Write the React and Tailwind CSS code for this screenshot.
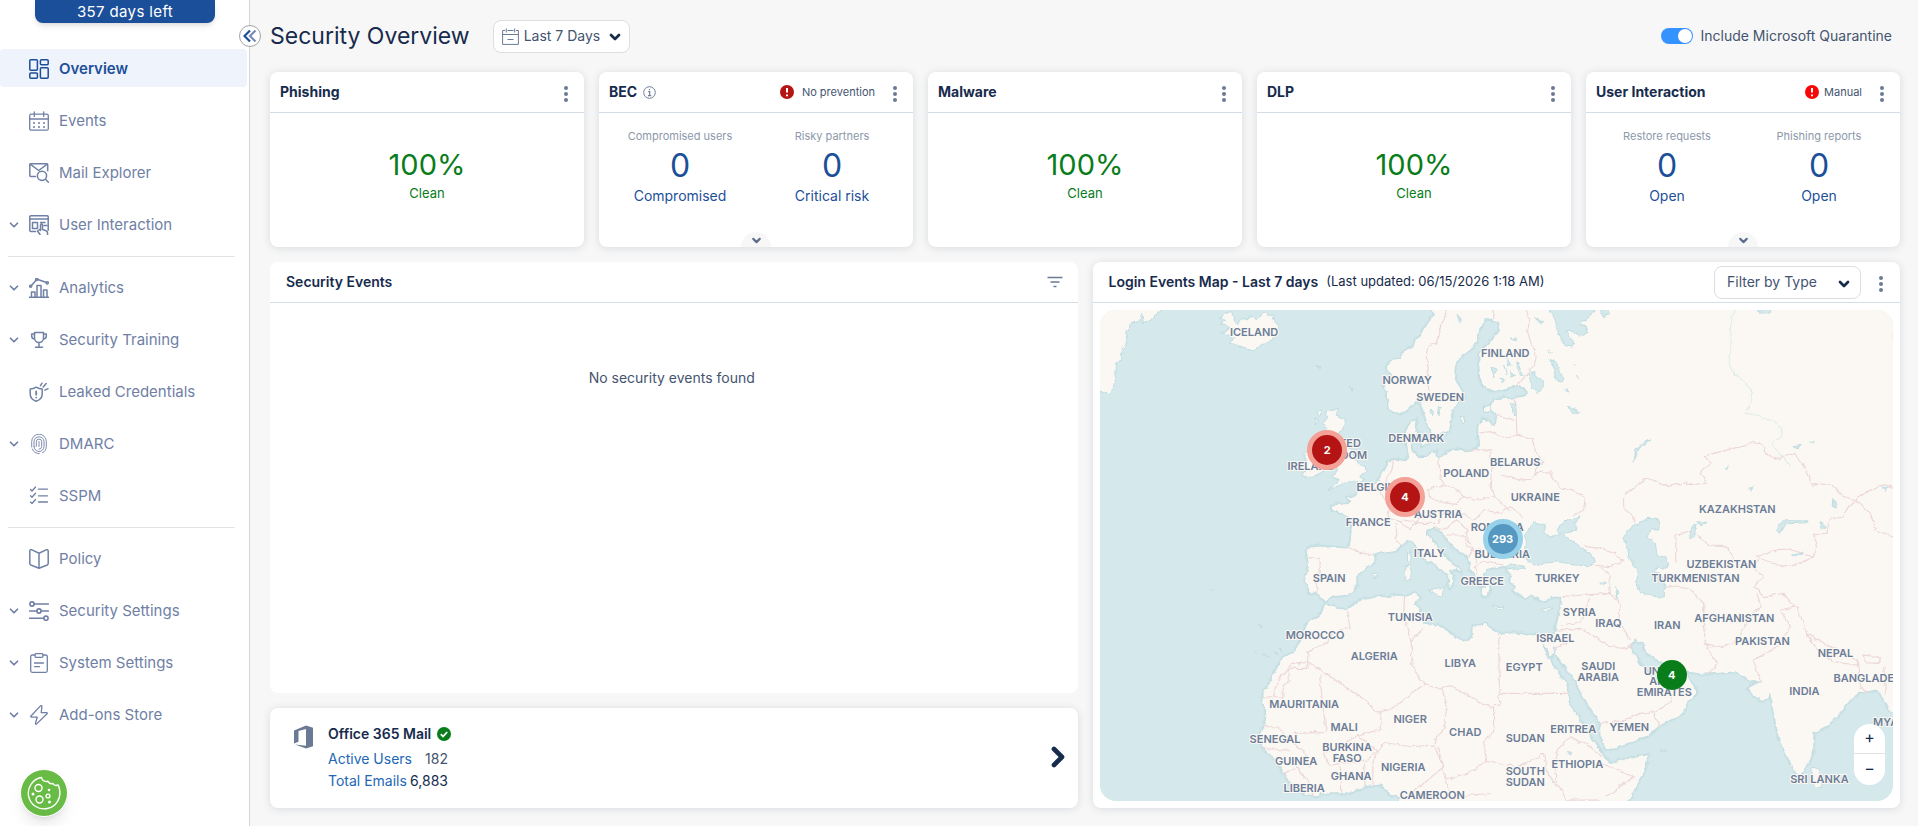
import { useState } from "react";
import { ChevronDown, ChevronRight } from "lucide-react";

const svgProps = {
  width: 20,
  height: 20,
  viewBox: "0 0 20 20",
  fill: "none",
  stroke: "currentColor",
  strokeWidth: 1.3,
  strokeLinecap: "round",
  strokeLinejoin: "round",
};

const icons = {
  overview: (
    <svg {...svgProps} strokeWidth={1.5}>
      <rect x="0.8" y="0.8" width="7.6" height="10.4" rx="1" />
      <rect x="11.4" y="0.8" width="7.8" height="5" rx="1" />
      <rect x="0.8" y="14" width="7.6" height="5.2" rx="1" />
      <rect x="11.4" y="8.8" width="7.8" height="10.4" rx="1" />
    </svg>
  ),
  events: (
    <svg {...svgProps}>
      <rect x="0.7" y="3.2" width="18.6" height="16" rx="1.5" />
      <path d="M.7 8h18.6M5.3.8v4.6M14.7.8v4.6" />
      <path strokeWidth="2" d="M5 12h.01M10 12h.01M15 12h.01M5 16h.01M10 16h.01M15 16h.01" />
    </svg>
  ),
  mail: (
    <svg {...svgProps} strokeWidth={1.5}>
      <path d="M6.5 13.5H1.8a1 1 0 0 1-1-1V1.8a1 1 0 0 1 1-1h15.9a1 1 0 0 1 1 1v6" />
      <path d="M1.2 1.2l8.5 6.3 8.5-6.3" />
      <circle cx="13" cy="12.8" r="4.6" />
      <path d="M16.4 16.2l3 3" />
    </svg>
  ),
  interaction: (
    <svg {...svgProps} strokeWidth={1.5}>
      <path d="M6.5 16.5H1.8a1 1 0 0 1-1-1V1.8a1 1 0 0 1 1-1h16.4a1 1 0 0 1 1 1v13.500" />
      <path d="M.8 4h18.4" />
      <rect x="3.5" y="7.5" width="5" height="6" />
      <path d="M11.5 7.5H16M18 10.500h-3M11.5 15.500V10a1 1 0 0 1 2 0v4.500l3 1c2 .6 2.500 1.500 2 4M11.500 14l-3 2 2.500 3.500" />
    </svg>
  ),
  analytics: (
    <svg {...svgProps} strokeWidth={1.5}>
      <path d="M.5 19.3h19M2.500 19v-5h3.500v5M8 19V7.500h4V19M14.500 19v-7H18v7" />
      <path d="M2.500 7.500L7 2.200M8.800 1.500l8 2.800" />
      <circle cx="1.7" cy="8.3" r="1" />
      <circle cx="7.7" cy="1.4" r="1" />
      <circle cx="18.2" cy="4.8" r="1.1" />
    </svg>
  ),
  training: (
    <svg {...svgProps} strokeWidth={1.5}>
      <path d="M5.5 2.500h9v5.500a4.500 4.500 0 0 1-9 0zM5.500 4H2.700v2c0 1.800 1.200 3 3 3M14.500 4h2.800v2c0 1.800-1.200 3-3 3M10 12.500v4.500M6.500 17.200h7" />
    </svg>
  ),
  leaked: (
    <svg {...svgProps} strokeWidth={1.5}>
      <path d="M7.2 5.200C5 6.600 3 7 1.200 7v5c0 3.600 2.500 6 6 7.300 3.500-1.300 6-3.700 6-7.300V7c-1.800 0-3.800-.4-6-1.800z" />
      <path strokeWidth="1.8" d="M7.2 9.300v3.400M7.200 15.600v.01" />
      <path d="M11.5 3.700l1.500-2.500M14.200 5l3-3.500M16 8.200l3-1.500" />
    </svg>
  ),
  dmarc: (
    <svg {...svgProps} strokeWidth={0.9}>
      <path d="M2.7 13V7.500a7.300 7.300 0 0 1 14.600 0v5c0 3-1.500 5.300-3.800 6.300M3.300 15a7 7 0 0 0 7 4.500" />
      <path d="M5 12.500V7.800a5 5 0 0 1 10 0v4.700a5 5 0 0 1-10 0" />
      <path d="M7.300 12.500V7.800a2.700 2.700 0 0 1 5.400 0v4.700a2.700 2.700 0 0 1-2.700 2.700" />
      <path d="M10 7.500v5" />
    </svg>
  ),
  sspm: (
    <svg {...svgProps}>
      <path d="M1.5 3.500l1.500 1.500L6.500 1M1.500 9.800l1.500 1.500 3.500-4M1.500 16l1.500 1.500 3.500-4M9.500 3.200h9M9.500 9.800h9M9.500 16h9" />
    </svg>
  ),
  policy: (
    <svg {...svgProps} strokeWidth={1.5}>
      <path d="M10 4.200L3 .9C1.500.4.8.8.8 2v12.500c0 .7.3 1.200 1 1.500l8.200 3.200 8.200-3.200c.7-.3 1-.8 1-1.500V2c0-1.200-.7-1.600-2.200-1.100zM10 4.200v15" />
    </svg>
  ),
  security: (
    <svg {...svgProps} strokeWidth={1.6}>
      <path d="M5 3h14.300M.7 10h7M12.300 10h7M.7 17.200H15" />
      <circle cx="3" cy="3" r="2.1" />
      <circle cx="10" cy="10" r="2.1" />
      <circle cx="17" cy="17.2" r="2.1" />
    </svg>
  ),
  system: (
    <svg {...svgProps}>
      <path d="M6 2H3.200a1.500 1.500 0 0 0-1.500 1.500v14.300a1.500 1.500 0 0 0 1.500 1.500h13.600a1.500 1.500 0 0 0 1.500-1.500V3.500A1.500 1.500 0 0 0 16.800 2H14" />
      <rect x="6" y="0.7" width="8" height="3.6" rx="1" />
      <path d="M5.500 10h9M5.500 13.700h5" />
    </svg>
  ),
  addons: (
    <svg {...svgProps}>
      <path d="M11.500.9L2 11c-.5.6-.3 1.200.5 1.200h5.700l-1.700 6c-.2.9.6 1.300 1.200.7L18 8.800c.5-.6.3-1.200-.5-1.200h-5.300l.7-6c.1-.9-.8-1.300-1.400-.7z" />
    </svg>
  ),
};

const menu = [
  [
    { label: "Overview", icon: "overview", active: true },
    { label: "Events", icon: "events" },
    { label: "Mail Explorer", icon: "mail" },
    { label: "User Interaction", icon: "interaction", open: true },
  ],
  [
    { label: "Analytics", icon: "analytics", open: true },
    { label: "Security Training", icon: "training", open: true },
    { label: "Leaked Credentials", icon: "leaked" },
    { label: "DMARC", icon: "dmarc", open: true },
    { label: "SSPM", icon: "sspm" },
  ],
  [
    { label: "Policy", icon: "policy" },
    { label: "Security Settings", icon: "security", open: true },
    { label: "System Settings", icon: "system", open: true },
    { label: "Add-ons Store", icon: "addons", open: true },
  ],
];

function Sidebar() {
  return (
    <aside className="relative flex w-[250px] shrink-0 flex-col border-r border-[#d5d6d9] bg-white">
      <div className="ml-[35px] flex h-[23px] w-[180px] items-center justify-center rounded-b-lg bg-[#1c4f99] pt-[2px] text-[15px] tracking-wide text-white shadow-md">
        357 days left
      </div>
      <button
        aria-label="Collapse menu"
        className="absolute top-[25px] -right-[12px] flex size-[22px] items-center justify-center rounded-full border border-[#a5a5a5] bg-white"
      >
        <svg width="14" height="14" viewBox="0 0 14 14" fill="none" strokeWidth="2.2">
          <path stroke="#1c4f99" d="M7 1.500L1.500 7 7 12.500" />
          <path stroke="#7c8bb0" d="M12.500 1.500L7 7l5.500 5.500" />
        </svg>
      </button>
      <nav className="mt-[26px] flex flex-col">
        {menu.map((group, i) => (
          <ul key={i} className={i === 0 ? "flex flex-col gap-[14px]" : "mt-[13px] flex flex-col gap-[14px]"}>
            {i > 0 && <li className="mr-[14px] -mb-[3px] ml-2 border-t border-[#e2e2e4]" />}
            {group.map((item) => (
              <li key={item.label}>
                <a
                  href="#"
                  className={
                    item.active
                      ? "mr-[2px] flex h-[38px] items-center rounded bg-[#eff3fb] pt-[2px] text-[15px] font-semibold text-[#1c4f99]"
                      : "mr-[2px] flex h-[38px] items-center pt-[2px] text-[15px] text-[#7080a5]"
                  }
                >
                  <span className="flex w-[29px] justify-start pl-[7px]">
                    {item.open && <ChevronDown size={14} strokeWidth={3} />}
                  </span>
                  <span className="flex w-5 justify-center">{icons[item.icon]}</span>
                  <span className="ml-[10px]">{item.label}</span>
                </a>
              </li>
            ))}
          </ul>
        ))}
      </nav>
      <button
        aria-label="Cookie settings"
        className="absolute bottom-[9px] left-[20px] flex size-12 items-center justify-center rounded-full border border-white bg-[#68bc45] text-white shadow-lg"
      >
        <svg width="34" height="34" viewBox="0 0 34 34" fill="none" stroke="currentColor" strokeWidth="1.4" strokeLinejoin="round">
          <path d="M14.500 1.500A15.800 15.800 0 1 0 32.500 13.500c-.2-2-.7-3.400-1.500-4.500-2 1-4 .3-5-1.500-2 .5-4-.3-5-2.200-3 .6-6-.6-6.500-3.800z" />
          <circle cx="11.5" cy="12" r="3.5" />
          <circle cx="12.5" cy="23.5" r="3.5" />
          <circle cx="21" cy="20" r="1.9" />
          <circle cx="22" cy="14" r="1.3" fill="currentColor" stroke="none" />
          <circle cx="6" cy="18" r="1.5" fill="currentColor" stroke="none" />
          <circle cx="22.5" cy="26" r="1.5" fill="currentColor" stroke="none" />
        </svg>
      </button>
    </aside>
  );
}

function Dots() {
  return (
    <button aria-label="More options" className="flex w-4 flex-col items-center gap-[2px] pt-[3px]">
      <span className="size-1 rounded-full bg-[#6b7a94]" />
      <span className="size-1 rounded-full bg-[#6b7a94]" />
      <span className="size-1 rounded-full bg-[#6b7a94]" />
    </button>
  );
}

function Alert({ color }) {
  return (
    <svg width="14" height="14" viewBox="0 0 14 14">
      <circle cx="7" cy="7" r="7" fill={color} />
      <path d="M7 3v4.500M7 9.500v1.800" stroke="#fff" strokeWidth="2" />
    </svg>
  );
}

const cards = [
  { title: "Phishing" },
  {
    title: "BEC",
    info: true,
    status: "No prevention",
    color: "#b41414",
    stats: [
      ["Compromised users", "Compromised"],
      ["Risky partners", "Critical risk"],
    ],
  },
  { title: "Malware" },
  { title: "DLP" },
  {
    title: "User Interaction",
    status: "Manual",
    color: "#f90606",
    stats: [
      ["Restore requests", "Open"],
      ["Phishing reports", "Open"],
    ],
  },
];

function Card({ card }) {
  return (
    <section className="relative flex h-[175px] flex-col overflow-hidden rounded-lg bg-white shadow-[0_1px_8px_rgba(30,50,80,0.14)]">
      <header className="flex h-[41px] items-center border-b border-[#d5dde8] px-[10px]">
        <h2 className="text-sm font-bold text-[#172b4d]">{card.title}</h2>
        {card.info && (
          <svg className="ml-[6px]" width="13" height="13" viewBox="0 0 13 13" fill="none" stroke="#6f7f99">
            <circle cx="6.5" cy="6.5" r="5.8" />
            <path d="M5.200 5.700h1.500v4M5 9.700h3.200M6.500 3v1.300" strokeWidth="1.2" />
          </svg>
        )}
        <div className="ml-auto flex items-center">
          {card.status && (
            <>
              <Alert color={card.color} />
              <span className={card.info ? "mr-3 ml-2 text-[11px] text-[#44546f]" : "mr-3 ml-[5px] text-[11px] text-[#44546f]"}>
                {card.status}
              </span>
            </>
          )}
          <Dots />
        </div>
      </header>
      {card.stats ? (
        <div className="grid grid-cols-2 px-[5px] pt-[15px]">
          {card.stats.map(([top, bottom]) => (
            <a href="#" key={top} className="flex flex-col items-center text-[#1c4f99]">
              <span className="text-[11px] leading-4 text-[#8c98ab]">{top}</span>
              <span className="mt-[2px] text-[32px] leading-10">0</span>
              <span className="text-sm leading-5">{bottom}</span>
            </a>
          ))}
        </div>
      ) : (
        <a href="#" className="flex flex-col items-center pt-8 text-[#087d1a]">
          <span className="text-[29px] leading-10">100%</span>
          <span className="text-[13px] leading-4">Clean</span>
        </a>
      )}
      {card.stats && (
        <button
          aria-label="Expand"
          className="absolute bottom-0 left-1/2 flex h-[15px] w-[30px] -translate-x-1/2 items-center justify-center rounded-t-full bg-[#f7f7f7] pt-[2px] text-[#5f6f8b]"
        >
          <ChevronDown size={13} strokeWidth={4} />
        </button>
      )}
    </section>
  );
}

const mainland =
  "M1025 20 1030 45 1018 60 1012 75 1000 85 990 105 975 120 968 138 950 150 935 160 930 172 910 180 895 190 888 200 890 215 905 222 888 240 880 262 890 275 888 290 895 300 892 318 905 332 925 342 945 335 962 318 975 310 988 300 995 320 1000 340 1005 355 1012 378 1025 405 1045 412 1055 400 1078 395 1083 360 1085 330 1100 310 1120 295 1115 270 1100 250 1093 230 1095 200 1105 180 1125 160 1150 140 1165 120 1165 100 1175 80 1185 60 1205 58 1225 68 1230 90 1210 110 1195 130 1180 145 1168 165 1165 190 1167 215 1168 240 1180 260 1205 275 1230 270 1260 262 1290 257 1315 280 1290 290 1250 298 1242 292 1215 300 1203 310 1205 330 1220 345 1215 370 1205 375 1190 360 1175 358 1163 380 1162 410 1165 435 1160 445 1140 450 1125 455 1110 445 1085 450 1060 465 1048 475 1035 468 1040 455 1020 460 1010 470 985 470 966 450 962 430 970 415 983 400 975 385 978 358 955 372 945 395 948 420 950 440 955 470 945 482 930 480 910 478 890 488 888 500 875 515 868 535 855 548 840 555 830 562 805 575 795 588 772 590 778 605 770 615 750 612 725 615 722 625 735 632 750 640 770 650 785 670 782 700 780 725 775 745 740 742 690 738 655 742 648 750 652 775 655 800 650 815 643 840 652 860 652 880 680 880 695 895 706 905 720 890 750 888 775 885 790 870 800 855 800 830 815 815 835 800 852 790 855 775 850 765 870 755 895 758 915 755 935 735 950 722 965 725 975 735 980 750 1000 775 1030 790 1045 805 1060 815 1075 825 1078 840 1072 855 1080 865 1092 845 1090 830 1078 812 1095 808 1113 820 1112 810 1085 790 1060 765 1045 745 1030 720 1012 703 1012 690 1030 685 1045 692 1060 705 1070 720 1090 745 1120 762 1135 775 1138 795 1140 810 1150 825 1160 840 1168 858 1190 862 1170 868 1175 885 1187 892 1195 885 1200 865 1192 845 1180 822 1190 808 1210 805 1235 800 1262 802 1250 812 1262 825 1258 845 1275 860 1270 875 1290 885 1305 895 1320 885 1345 900 1365 905 1385 892 1400 892 1415 890 1412 915 1405 940 1400 965 1392 1000 1370 1012 1335 1000 1310 1005 1290 1000 1265 998 1240 1002 1228 998 1210 990 1185 973 1160 975 1145 985 1145 1010 1130 1025 1110 1020 1080 1000 1065 985 1035 975 1000 970 985 955 990 930 975 910 990 890 975 880 945 888 920 885 890 890 860 890 820 895 790 915 770 928 740 925 715 915 705 910 695 935 680 950 655 965 640 990 630 1025 610 1055 575 1075 555 1110 540 1145 520 1175 513 1195 525 1220 527 1250 520 1280 505 1310 515 1330 520 1350 545 1370 565 1395 580 1420 600 1450 640 1480 675 1490 700 1480 740 1478 770 1482 800 1468 830 1460 870 1455 890 1470 900 1485 925 1490 935 1520 1605 1520 1640 1460 1665 1410 1673 1363 1640 1370 1590 1380 1560 1387 1545 1375 1530 1350 1500 1310 1480 1280 1465 1250 1445 1225 1435 1200 1430 1150 1400 1110 1370 1060 1355 1030 1368 1050 1382 1070 1395 1040 1393 1065 1430 1110 1455 1145 1475 1185 1505 1235 1530 1270 1533 1320 1545 1347 1580 1342 1630 1325 1670 1310 1705 1280 1740 1260 1780 1240 1790 1210 1820 1180 1815 1160 1800 1145 1790 1118 1775 1145 1750 1155 1710 1155 1685 1135 1675 1120 1665 1105 1650 1090 1630 1060 1620 1035 1635 1020 1655 1030 1670 1060 1700 1080 1730 1100 1780 1115 1830 1122 1880 1120 1935 1115 1965 1135 1980 1145 2005 1145 1970 1165 1990 1185 2015 1205 2035 1195 2038 1180 2045 1210 2050 1260 2065 1320 2095 1380 2115 1420 2130 1425 2142 1405 2160 1380 2170 1350 2170 1300 2205 1280 2230 1260 2260 1225 2285 1195 2305 1180 2330 1175 2360 1170 2370 1185 2390 1220 2420 1250 2420 20Z";

const islands = [
  "M10 10H225L210 35 195 48 180 62 160 68 155 45 148 65 120 72 118 88 105 95 113 125 97 150 93 180 80 190 77 225 70 262 60 285 40 278 10 265Z",
  "M405 40 425 35 430 60 445 75 455 55 470 60 485 48 500 60 515 40 530 35 535 50 552 45 550 62 568 75 565 95 545 120 520 132 485 153 460 142 440 135 418 130 430 115 415 105 395 100 415 92 418 82 390 72 405 62 390 55Z",
  "M710 335 745 325 738 345 765 358 765 375 750 395 740 405 765 420 775 445 795 470 800 492 825 500 828 515 812 530 822 540 790 548 760 550 735 562 712 572 730 555 750 540 735 535 722 530 745 510 735 500 745 480 735 460 720 455 710 440 715 420 700 405 708 385 698 370 710 355Z",
  "M655 455 640 462 645 480 628 500 645 512 635 525 650 535 680 525 715 505 712 480 718 465 700 445 675 445Z",
  "M945 800 960 795 967 810 960 838 948 842 945 820Z",
  "M952 762 962 757 962 785 952 785Z",
  "M1015 868 1040 865 1062 862 1055 888 1040 885Z",
  "M1205 918 1240 920 1240 926 1210 924Z",
  "M1355 928 1385 922 1375 932 1360 935Z",
  "M990 420 1010 418 1012 435 995 440Z",
  "M1180 320 1200 315 1198 332 1180 335Z",
  "M1110 350 1125 352 1118 372 1112 368Z",
  "M680 335 692 330 690 345ZM672 355 688 362 680 372ZM1062 400h6v6z",
  "M845 825 858 820 865 828 850 834Z",
  "M2165 1400 2185 1410 2198 1440 2190 1462 2172 1462 2165 1435Z",
  "M1710 1350 1728 1350 1726 1354 1712 1354Z",
  "M495 1054h4v4zM515 1062h8v4zM532 1068h7v4zM555 1058h6v5zM567 1048h5v6zM680 200h8v6zM778 262h6v10zM362 868h7v4zM508 976h6v4z",
];

const lakes = [
  "M1375 20 1395 70 1405 105 1425 135 1445 138 1450 125 1435 110 1430 90 1455 98 1470 110 1492 100 1485 80 1470 70 1495 50 1530 20Z",
  "M1525 20 1540 50 1555 45 1560 20Z",
  "M1315 225 1330 218 1360 245 1358 265 1340 278 1325 260Z",
  "M1380 180 1400 190 1408 210 1420 240 1405 245 1390 225 1395 210Z",
  "M1262 312h14l2 30-8 3z",
  "M1435 320l20 5 10 15-15 0z",
  "M1985 20h55v18l-30 2z",
  "M1308 700 1330 668 1365 678 1362 695 1380 712 1410 700 1430 715 1470 740 1505 765 1515 785 1500 797 1450 795 1410 785 1360 790 1330 795 1300 770 1305 730Z",
  "M1395 692 1415 670 1435 660 1472 650 1455 670 1460 690 1430 700 1412 698Z",
  "M1240 802 1260 792 1300 798 1305 803 1270 808Z",
  "M1598 715 1615 690 1640 672 1675 655 1708 660 1705 690 1680 690 1670 710 1695 730 1700 765 1728 772 1735 795 1715 805 1705 800 1695 815 1712 825 1722 845 1722 888 1685 890 1650 875 1635 850 1645 820 1630 795 1615 770 1612 740Z",
  "M1798 715l5-30 14-12-6 40zM1820 665l30 2-18 10z",
  "M2058 690l20-28 74 0-6 6-60 4-16 28z",
  "M2100 765l38-5-20 10zM2190 668l10 5 2 12-8-2z",
  "M1575 860l8 15-2 20zM1525 848l22-2-8 8zM1432 1355l12 2-5 8zM1975 565l14-4-8 10z",
  "M2110 440l22-4-12 10zM2160 423h12v4zM2378 562h14l-4 12zM2230 595l8 30-10-5z",
  "M1630 488l6-35 20-25 26-8-24 16-18 22zM1905 505l8-8-4 12z",
  "M1100 45l14 12-4 8zM1045 320l10 0-14 28zM1020 330l12 5-8 8zM1205 200l15 10-10 20zM1240 195l8 30zM1280 185l10 20-8 6z",
  "M1250 180l12 14-10 4zM1262 215l12 12-12 4zM1290 210l8 16-10-4zM1232 235l12 4-8 8z",
  "M1335 55l25 10-8 6zM1260 115h18v8zM1375 150l8 12zM1450 195l6 4zM1460 225l8 10zM1425 270h10v6z",
];

const borders =
  "M1068 30 1065 55 1050 75 1052 100 1035 130 1012 140 1008 175 1015 210 1010 240 1018 275 1000 305M1205 30 1212 58M1308 30 1318 60 1312 95 1322 130 1338 175 1320 215 1290 245 1278 258M1275 295 1278 350 1280 405M1220 345 1270 360M1162 400 1200 395 1250 415 1280 405 1325 415 1335 455 1358 485 1338 505 1340 520M1230 525 1290 540 1325 538 1340 518 1380 515 1390 540 1415 568 1445 572 1485 592 1480 630 1452 645M1635 668 1630 650 1600 620 1600 585 1630 565 1665 535 1690 540 1730 560 1780 550 1830 552 1850 545 1828 520 1860 490 1843 468 1910 450 1965 438 1980 427 2015 432 2025 460 2065 478 2110 460 2135 490 2165 555 2220 552 2260 590 2295 600 2330 575 2380 555 2410 562M2295 600 2265 630 2260 652 2220 655 2205 700 2170 705 2178 740 2170 768M2295 600 2340 640 2355 690 2410 712M1756 790 1757 705 1800 692 1860 738 1910 740 1930 775M2000 770 2050 752 2100 750 2170 768 2130 790 2070 800 2010 775 1985 800 2020 830 1990 860 2020 890 2080 880 2110 920" +
  "M1045 475 1048 510 1058 555 1010 570M1058 555 1090 565 1120 590 1100 610 1060 605 1030 600 1010 570M1140 450 1200 450 1205 500 1200 560 1215 590 1165 600 1120 590M910 478 905 510 880 560 900 620 890 655M915 670 920 700 915 720 935 735M890 655 930 665 960 690 1000 640M940 660 1000 670 1040 670 1060 640 1110 630M1030 680 1060 690 1100 660 1130 690 1130 720 1150 740 1135 775M1065 705 1120 705 1130 740M1115 640 1150 660 1180 630 1230 640 1260 620 1300 650M1130 740 1180 750 1240 740 1300 755M1160 825 1155 800 1180 785 1240 795M1150 740 1160 790M1215 590 1260 635M775 745 810 758 850 765M655 770 690 775 690 820 680 840 680 880M840 555 870 575 885 600M1485 740 1530 745 1570 760 1600 780 1560 800 1500 795" +
  "M770 930 780 985 745 990 705 1030 653 1055 653 1085 820 1195 857 1235 873 1235 905 1225 1003 1152M513 1193 578 1193 580 1155 597 1145 597 1105 653 1105 653 1085M550 1190 560 1150 605 1090 653 1085M720 1127 688 1125 708 1297 610 1300M873 1235 870 1290 800 1305M943 890 940 950 963 1025 965 1100 1003 1152M963 1025 998 985M1003 1152 1045 1168 1073 1155 1210 1225M1225 1000 1228 1215 1210 1217 1210 1295 1180 1325 1190 1385M1228 1180 1430 1180M1055 1165 1070 1215 1062 1285 1030 1330M1030 1335 960 1340 890 1328 865 1345 848 1400 848 1455M1030 1335 1060 1400 1000 1450 950 1490M1045 1340 1065 1440 1120 1425 1190 1385 1290 1400 1360 1360 1370 1420 1400 1460M1065 1440 1080 1490 1200 1480M1400 1350 1440 1310 1500 1340 1535 1370M1400 1350 1395 1440 1430 1500 1530 1500M1535 1390 1630 1430 1550 1490M750 1340 800 1305 860 1350 830 1380 720 1395 700 1360 750 1340M520 1280 560 1280 600 1320 640 1355 660 1400M515 1345 600 1350M580 1420 620 1400 650 1440 670 1490M750 1400 755 1478M820 1390 825 1460" +
  "M1420 890 1480 885 1560 880 1555 820 1530 800M1560 880 1590 910 1585 960 1620 1020M1415 975 1470 965 1500 890M1400 990 1470 985 1560 1040 1600 1045 1625 1035M1395 1045 1430 1030 1430 1000M1533 1270 1610 1260 1650 1240 1690 1235 1740 1210 1750 1180M1690 1235 1705 1275M1722 862 1760 858 1800 870 1840 910 1840 985 1850 1040 1880 1090 1855 1120M1840 1035 1900 1040 1940 1020 1975 960 2010 920 2000 880M2010 1145 1990 1080 2060 1040 2100 980 2070 930 2120 920 2150 1000 2180 1050 2230 1085 2300 1095M2150 1000 2200 1030 2300 1080 2310 1160 2330 1180M2320 1065 2370 1070 2365 1090 2325 1088ZM2380 1100 2385 1180";

const rivers =
  "M1935 30C1905 80 1935 120 1915 190C1930 230 1960 240 1965 255 2015 300 1965 310 1968 340C2020 350 2090 370 2072 410 2010 440 2080 450 2100 500 2150 550C2200 570 2240 570 2235 600 2260 640 2320 650 2340 640M1330 1020C1345 1080 1325 1120 1370 1120 1360 1180 1310 1200 1330 1250 1390 1220 1370 1230 1360 1300 1330 1340 1350 1400 1340 1490M2170 1030C2230 1060 2300 1040 2410 1045M2350 940 2410 935";

const labels = [
  ["ICELAND", 154, 22], ["NORWAY", 307, 70], ["SWEDEN", 340, 87], ["FINLAND", 405, 43],
  ["DENMARK", 316, 128], ["UNITED", 240, 133], ["KINGDOM", 240, 145], ["IRELAND", 211, 156],
  ["BELGIUM", 281, 177], ["POLAND", 366, 163], ["BELARUS", 415, 152], ["AUSTRIA", 338, 204],
  ["FRANCE", 268, 212], ["ITALY", 329, 243], ["ROMANIA", 397, 217], ["BULGARIA", 402, 244],
  ["UKRAINE", 435, 187], ["KAZAKHSTAN", 637, 199], ["UZBEKISTAN", 621, 254],
  ["TURKMENISTAN", 595, 268], ["TURKEY", 457, 268], ["SPAIN", 229, 268], ["GREECE", 382, 271],
  ["TUNISIA", 310, 307], ["MOROCCO", 215, 325], ["ALGERIA", 274, 346], ["LIBYA", 360, 353],
  ["MAURITANIA", 204, 394], ["MALI", 244, 417], ["NIGER", 310, 409], ["CHAD", 365, 422],
  ["SENEGAL", 175, 429], ["BURKINA", 247, 437], ["FASO", 247, 448], ["GUINEA", 196, 451],
  ["NIGERIA", 303, 457], ["GHANA", 251, 466], ["LIBERIA", 204, 478], ["CAMEROON", 332, 485],
  ["SYRIA", 479, 302], ["IRAQ", 508, 313], ["IRAN", 567, 315], ["AFGHANISTAN", 634, 308],
  ["PAKISTAN", 662, 331], ["ISRAEL", 455, 328], ["EGYPT", 424, 357], ["SAUDI", 498, 356],
  ["ARABIA", 498, 367], ["UNITED", 564, 361], ["ARAB", 564, 371], ["EMIRATES", 564, 382],
  ["NEPAL", 735, 343], ["BANGLADESH", 771, 368], ["INDIA", 704, 381], ["MYANMAR", 802, 412],
  ["SRI LANKA", 719, 469], ["SUDAN", 425, 428], ["ERITREA", 473, 419], ["YEMEN", 529, 417],
  ["ETHIOPIA", 477, 454], ["SOUTH", 425, 461], ["SUDAN", 425, 472], ["RUSSIA", 812, 26],
];

function WorldMap() {
  return (
    <svg className="absolute inset-0 size-full" viewBox="0 0 793 491" preserveAspectRatio="xMidYMid slice" role="img" aria-label="Login events map">
      <defs>
        <filter id="coast" x="0" y="0" width="100%" height="100%">
          <feTurbulence type="fractalNoise" baseFrequency="0.05" numOctaves="3" seed="4" />
          <feDisplacementMap in="SourceGraphic" scale="14" xChannelSelector="R" yChannelSelector="G" />
        </filter>
      </defs>
      <g transform="scale(0.33333) translate(-30 -30)">
        <g filter="url(#coast)">
          {/* soft shade of shallow water around the coast */}
          <path d={mainland} fill="none" stroke="#cbe2e6" strokeWidth="10" />
          <g fill="#fbf8f3" stroke="#c1dde1" strokeWidth="3">
            <path d={mainland} />
            {islands.map((d) => (
              <path key={d} d={d} />
            ))}
          </g>
          <path d={borders} fill="none" stroke="#ecd7d9" strokeWidth="3.5" />
          <path d={rivers} fill="none" stroke="#dcebea" strokeWidth="3" />
          <g fill="#d5e8eb" stroke="#c1dde1" strokeWidth="3">
            {lakes.map((d) => (
              <path key={d} d={d} />
            ))}
          </g>
        </g>
      </g>
      <g className="text-[11px] font-semibold" fill="#6c7d97" stroke="#fbf8f3" strokeWidth="2" paintOrder="stroke" textAnchor="middle" dominantBaseline="central">
        {labels.map(([name, x, y], i) => (
          <text key={i} x={x} y={y}>
            {name}
          </text>
        ))}
      </g>
    </svg>
  );
}

const pins = [
  { count: 2, left: "28.7%", top: "28.5%", style: "size-10 border-[#f4a198] bg-[#b41414]" },
  { count: 4, left: "38.5%", top: "38.1%", style: "size-10 border-[#f4a198] bg-[#b41414]" },
  { count: 293, left: "50.8%", top: "46.6%", style: "size-10 border-[#97d2ea] bg-[#5598c2]" },
  { count: 4, left: "72.1%", top: "74.3%", style: "size-10 border-transparent bg-[#087d1a] bg-clip-padding" },
];

export default function App() {
  const [quarantine, setQuarantine] = useState(true);

  return (
    <div className="flex min-h-screen bg-[#f7f7f7] font-['Inter',sans-serif] text-[#172b4d]">
      <Sidebar />
      <main className="flex min-w-0 flex-1 flex-col pr-[18px] pb-[18px] pl-5">
        <div className="flex h-[72px] items-center">
          <h1 className="text-[23px]">Security Overview</h1>
          <div className="relative ml-[23px]">
            <select aria-label="Period" className="h-[33px] w-[137px] appearance-none rounded-lg border border-[#dcdee2] bg-white pl-[30px] text-sm text-[#44546f]">
              <option>Last 7 Days</option>
            </select>
            <svg className="pointer-events-none absolute top-[8px] left-[9px]" width="17" height="17" viewBox="0 0 17 17" fill="none" stroke="#6b7a94">
              <path d="M3 2.500H.6v13.900h15.800V2.500H14M5.500 2.500h6M.6 6.500h15.800M4.300.5v4M12.700.5v4M5.500 11.500h6" />
            </svg>
            <ChevronDown className="pointer-events-none absolute top-[9px] right-[7px]" size={16} strokeWidth={4} />
          </div>
          <label className="mr-2 ml-auto flex items-center gap-2 text-sm text-[#44546f]">
            <input
              type="checkbox"
              checked={quarantine}
              onChange={(e) => setQuarantine(e.target.checked)}
              className="flex h-4 w-8 appearance-none items-center rounded-full bg-gray-400 p-[1px] before:size-[14px] before:rounded-full before:bg-white checked:justify-end checked:bg-[#3593ff]"
            />
            Include Microsoft Quarantine
          </label>
        </div>

        <div className="grid grid-cols-5 gap-[15px]">
          {cards.map((card) => (
            <Card key={card.title} card={card} />
          ))}
        </div>

        <div className="mt-[15px] grid flex-1 grid-cols-2 gap-[15px]">
          <div className="flex flex-col gap-[15px]">
            <section className="flex-1 rounded-lg bg-white">
              <header className="flex h-[41px] items-center justify-between border-b border-[#d5dde8] pr-[15px] pl-4">
                <h2 className="text-sm font-semibold">Security Events</h2>
                <button aria-label="Filter events">
                  <svg width="16" height="12" viewBox="0 0 16 12" stroke="#6b7a94" strokeWidth="1.5">
                    <path d="M.5 1.500h15M3.500 6h9M6.500 10.500h3" />
                  </svg>
                </button>
              </header>
              <p className="pt-[65px] pr-1 text-center text-sm text-[#44546f]">No security events found</p>
            </section>
            <section className="flex h-[100px] items-center rounded-lg bg-white pr-2 pb-[2px] pl-6 shadow-[0_1px_8px_rgba(30,50,80,0.14)]">
              <svg className="-mt-10" width="19" height="24" viewBox="0 0 19 24" fill="#6b7a94">
                <path d="M0 18.500V5.500L12 .5l7 2.200v18.500L12 23.500 1 19.500l11 1.200V4L4.500 6v10.800z" />
              </svg>
              <div className="ml-[15px] w-[125px] text-sm leading-[22px]">
                <h2 className="flex items-center gap-[6px] font-semibold whitespace-nowrap">
                  Office 365 Mail
                  <svg className="shrink-0" width="14" height="14" viewBox="0 0 14 14">
                    <circle cx="7" cy="7" r="7" fill="#087d1a" />
                    <path d="M3.800 7.200L6 9.500l4.200-4.500" fill="none" stroke="#fff" strokeWidth="1.8" />
                  </svg>
                </h2>
                <div className="mt-[3px] flex w-[120px] justify-between whitespace-nowrap">
                  <a href="#" className="text-[#2267b5]">Active Users</a>
                  <span className="text-[#44546f]">182</span>
                </div>
                <div className="flex w-[120px] justify-between whitespace-nowrap">
                  <a href="#" className="text-[#2267b5]">Total Emails</a>
                  <span>6,883</span>
                </div>
              </div>
              <button aria-label="Open Office 365 Mail" className="-mr-1 ml-auto">
                <ChevronRight size={32} strokeWidth={3.5} />
              </button>
            </section>
          </div>

          <section className="flex flex-col rounded-lg bg-white shadow-[0_1px_8px_rgba(30,50,80,0.14)]">
            <header className="flex h-[41px] items-center border-b border-[#d5dde8] pr-[11px] pl-4">
              <h2 className="text-sm font-semibold">Login Events Map - Last 7 days</h2>
              <span className="ml-2 text-[13px]">(Last updated: 06/15/2026 1:18 AM)</span>
              <div className="relative mr-3 ml-auto">
                <select aria-label="Filter by Type" className="h-[33px] w-[147px] appearance-none rounded-lg border border-[#dcdee2] bg-white pl-3 text-sm text-[#44546f]">
                  <option>Filter by Type</option>
                </select>
                <ChevronDown className="pointer-events-none absolute top-[10px] right-[9px]" size={16} strokeWidth={4} />
              </div>
              <Dots />
            </header>
            <div className="relative m-[7px] flex-1 overflow-hidden rounded-2xl bg-[#d5e8eb]">
              <WorldMap />
              {pins.map((pin, i) => (
                <button
                  key={i}
                  style={{ left: pin.left, top: pin.top }}
                  className={`absolute flex -translate-x-1/2 -translate-y-1/2 items-center justify-center rounded-full border-5 text-[11px] font-bold text-white ${pin.style}`}
                >
                  {pin.count}
                </button>
              ))}
              <div className="absolute right-2 bottom-4 flex w-[31px] flex-col overflow-hidden rounded-full bg-white text-base leading-none">
                <button aria-label="Zoom in" className="h-[30px] border-b border-[#e2e2e4] pb-[3px]">+</button>
                <button aria-label="Zoom out" className="h-[31px] pb-1">−</button>
              </div>
            </div>
          </section>
        </div>
      </main>
    </div>
  );
}
